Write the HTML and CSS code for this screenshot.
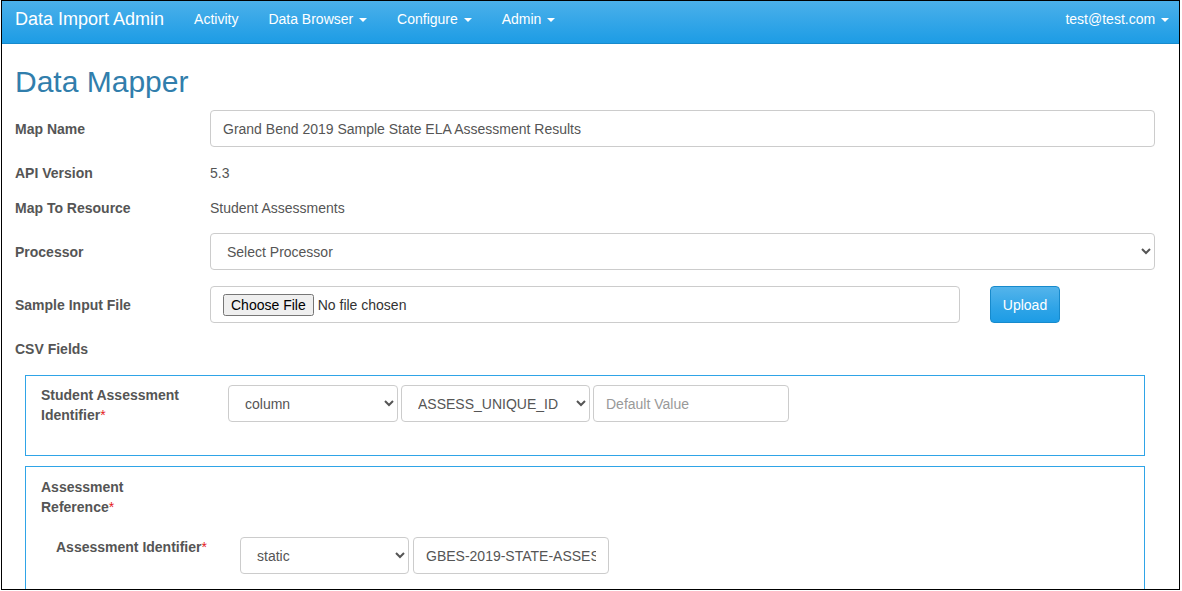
FILE: index.html
```html
<!DOCTYPE html>
<html>
<head>
<meta charset="utf-8">
<title>Data Mapper</title>
<link rel="stylesheet" href="styles.css">
</head>
<body>
<div class="frame">
  <nav class="navbar">
    <a class="brand">Data Import Admin</a>
    <ul class="nav">
      <li>Activity</li>
      <li>Data Browser <span class="caret"></span></li>
      <li>Configure <span class="caret"></span></li>
      <li>Admin <span class="caret"></span></li>
    </ul>
    <div class="nav-right">test@test.com <span class="caret"></span></div>
  </nav>
  <main class="content">
    <h2 class="title">Data Mapper</h2>
    <div class="row">
      <label class="lbl">Map Name</label>
      <input class="control grow" type="text" value="Grand Bend 2019 Sample State ELA Assessment Results">
    </div>
    <div class="row text-row tight">
      <label class="lbl">API Version</label>
      <span class="static">5.3</span>
    </div>
    <div class="row text-row tight">
      <label class="lbl">Map To Resource</label>
      <span class="static">Student Assessments</span>
    </div>
    <div class="row">
      <label class="lbl">Processor</label>
      <select class="control grow"><option>Select Processor</option></select>
    </div>
    <div class="row">
      <label class="lbl">Sample Input File</label>
      <input class="control file" type="file">
      <button class="btn-primary">Upload</button>
    </div>
    <div class="row text-row">
      <label class="lbl">CSV Fields</label>
    </div>
    <div class="panel">
      <div class="prow">
        <label class="plbl"><span class="ln">Student Assessment</span><span class="ln">Identifier<span class="req">*</span></span></label>
        <select class="control sel1"><option>column</option></select>
        <select class="control sel2"><option>ASSESS_UNIQUE_ID</option></select>
        <input class="control inp" type="text" placeholder="Default Value">
      </div>
    </div>
    <div class="panel panel2">
      <div class="plbl head"><span class="ln">Assessment</span><span class="ln">Reference<span class="req">*</span></span></div>
      <div class="prow nested">
        <label class="plbl nlbl">Assessment Identifier<span class="req">*</span></label>
        <select class="control sel3"><option>static</option></select>
        <input class="control inp2" type="text" value="GBES-2019-STATE-ASSESSMENT">
      </div>
    </div>
  </main>
</div>
</body>
</html>
```
FILE: styles.css
```css
* { box-sizing: border-box; }
html, body { margin: 0; padding: 0; background: #fff; }
body {
  font-family: "Liberation Sans", Arial, Helvetica, sans-serif;
  font-size: 14px;
  line-height: 20px;
  color: #555;
}
.frame {
  margin-left: 1px;
  width: 1179px;
  height: 590px;
  border: 1px solid #000;
  overflow: hidden;
}
.navbar {
  display: flex;
  align-items: flex-start;
  height: 43px;
  padding: 8px 10px 0 13px;
  background-image: linear-gradient(#4bb0ea, #2fa4e7 60%, #1d9ce5);
  border-bottom: 1px solid #178acc;
  color: #fff;
}
.brand {
  font-size: 18px;
  line-height: 20px;
  margin-right: 15px;
}
.nav {
  list-style: none;
  margin: 0;
  padding: 0;
  display: flex;
}
.nav li {
  padding: 0 15px;
  white-space: nowrap;
}
.nav-right { margin-left: auto; white-space: nowrap; }
.caret {
  display: inline-block;
  width: 0; height: 0;
  margin-left: 2px;
  vertical-align: middle;
  border-top: 4px solid #fff;
  border-left: 4px solid transparent;
  border-right: 4px solid transparent;
}
.content {
  padding: 0 24px 0 13px;
}
.title {
  margin: 21px 0 12px;
  font-size: 30px;
  line-height: 33px;
  font-weight: 400;
  color: #317eac;
}
.row {
  display: flex;
  align-items: center;
  margin-bottom: 16px;
}
.row.tight { margin-bottom: 15px; }
.text-row { min-height: 20px; }
.lbl {
  width: 195px;
  flex: none;
  font-weight: bold;
}
.control {
  height: 37px;
  padding: 8px 12px;
  font-family: inherit;
  font-size: 14px;
  line-height: 20px;
  color: #555;
  background: #fff;
  border: 1px solid #ccc;
  border-radius: 4px;
}
select.control { padding: 8px 8px 8px 12px; }
.control::placeholder { color: #999; }
.grow { flex: 1; min-width: 0; }
.file { width: 750px; padding: 7px 12px; font-size: 14px; color: #333; }
.btn-primary {
  margin-left: 30px;
  width: 70px;
  height: 37px;
  padding: 0;
  font-family: inherit;
  font-size: 14px;
  color: #fff;
  border: 1px solid #178acc;
  border-radius: 4px;
  background-image: linear-gradient(#54b4eb, #2fa4e7 60%, #1d9ce5);
}
.panel {
  margin: 0 10px 10px 10px;
  border: 1px solid #2fa4e7;
  padding: 9px 15px 30px 15px;
}
.panel2 { padding-top: 10px; }
.prow {
  display: flex;
  align-items: flex-start;
  gap: 3px;
}
.plbl {
  width: 184px;
  padding-right: 34px;
  flex: none;
  font-weight: bold;
  line-height: 20px;
}
.ln { display: block; white-space: nowrap; }
.head { width: 184px; }
.req { color: #e51c23; font-weight: normal; }
.sel1 { width: 170px; }
.sel2 { width: 189px; }
.inp { width: 196px; }
.nested { margin-top: 20px; padding-left: 15px; gap: 4px; }
.nlbl { width: 180px; padding-right: 0; margin-top: 0; }
.sel3 { width: 169px; }
.inp2 { width: 196px; }
```
